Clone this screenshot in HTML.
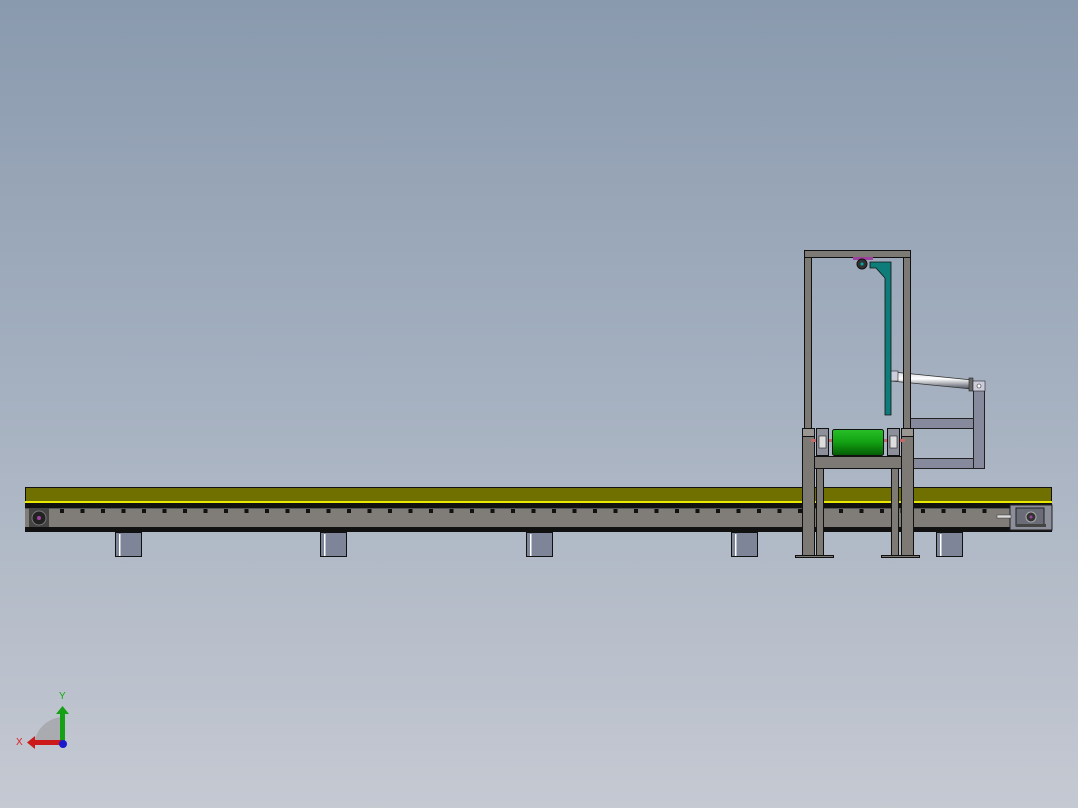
<!DOCTYPE html>
<html><head><meta charset="utf-8"><style>
html,body{margin:0;padding:0}
body{width:1078px;height:808px;overflow:hidden;background:linear-gradient(#8a9aae 0%,#a3afbf 45%,#c5c9d2 100%);font-family:"Liberation Sans",sans-serif}
svg{position:absolute;left:0;top:0}
</style></head><body>
<svg width="1078" height="808" viewBox="0 0 1078 808">
<defs>
<pattern id="holes" x="60" y="505" width="20.5" height="12" patternUnits="userSpaceOnUse">
<rect x="0" y="4" width="4" height="4" fill="#111"/>
</pattern>
<linearGradient id="grn" x1="0" y1="0" x2="0" y2="1"><stop offset="0" stop-color="#28c028"/><stop offset="0.5" stop-color="#12a012"/><stop offset="1" stop-color="#055a05"/></linearGradient>
<linearGradient id="cyl" x1="0" y1="0" x2="0" y2="1"><stop offset="0" stop-color="#d8dce4"/><stop offset="0.4" stop-color="#ffffff"/><stop offset="1" stop-color="#4a4f5c"/></linearGradient>
</defs>
<!-- legs -->
<g fill="#7e8598" stroke="#111" stroke-width="1">
<rect x="115.5" y="532.5" width="26" height="24"/>
<rect x="320.5" y="532.5" width="26" height="24"/>
<rect x="526.5" y="532.5" width="26" height="24"/>
<rect x="731.5" y="532.5" width="26" height="24"/>
<rect x="936.5" y="532.5" width="26" height="24"/>
</g>
<g fill="#fff"><rect x="119" y="534" width="1.5" height="22"/><rect x="324" y="534" width="1.5" height="22"/><rect x="530" y="534" width="1.5" height="22"/><rect x="735" y="534" width="1.5" height="22"/><rect x="940" y="534" width="1.5" height="22"/></g>
<!-- conveyor -->
<rect x="25.5" y="487.5" width="1026" height="14" fill="#6f7000" stroke="#111"/>
<rect x="25" y="501" width="1027" height="2" fill="#e8e800"/>
<rect x="25" y="503" width="1027" height="5" fill="#111"/>
<rect x="25" y="508" width="1027" height="20" fill="#807c78"/>
<rect x="25" y="508" width="1027" height="1" fill="#555"/>
<rect x="50" y="505" width="950" height="12" fill="url(#holes)"/>
<rect x="25" y="527" width="1027" height="5" fill="#111"/>
<!-- left drive -->
<rect x="29" y="508" width="20" height="19" fill="#444"/>
<circle cx="39" cy="518" r="7" fill="#222" stroke="#777"/>
<circle cx="39" cy="518" r="2" fill="#a040a0"/>
<!-- right drive -->
<rect x="1010" y="505" width="42" height="25" fill="#8c8e9a" stroke="#222"/>
<rect x="1016" y="508" width="28" height="18" fill="#6a6c78" stroke="#222"/>
<circle cx="1031" cy="517" r="5" fill="#333" stroke="#aaa"/>
<circle cx="1031" cy="517" r="1.5" fill="#a040a0"/>
<rect x="997" y="515" width="14" height="3" fill="#ddd" stroke="#333" stroke-width="0.5"/>
<rect x="1016" y="524" width="30" height="3" fill="#444"/>
<!-- gray bracket behind -->
<g fill="#868a9c" stroke="#222">
<rect x="910.5" y="418.5" width="70" height="10"/>
<rect x="910.5" y="458.5" width="74" height="10"/>
<rect x="973.5" y="387.5" width="11" height="81"/>
</g>
<!-- cylinder -->
<polygon points="893,372 972,380 971,389 892,381" fill="url(#cyl)" stroke="#333" stroke-width="0.7"/>
<rect x="969" y="378" width="4" height="13" fill="#666" stroke="#222" stroke-width="0.6"/>
<rect x="973" y="381" width="12" height="10" fill="#ccd" stroke="#222" stroke-width="0.6"/>
<circle cx="979" cy="386" r="2" fill="#fff" stroke="#222" stroke-width="0.6"/>
<rect x="890" y="371" width="8" height="10" fill="#ccd" stroke="#222" stroke-width="0.6"/>
<!-- frame -->
<g fill="#7d7a76" stroke="#111">
<rect x="804.5" y="250.5" width="106" height="7"/>
<rect x="804.5" y="257.5" width="7" height="171"/>
<rect x="903.5" y="257.5" width="7" height="171"/>
<rect x="802.5" y="428.5" width="12" height="127"/>
<rect x="901.5" y="428.5" width="12" height="127"/>
<rect x="816.5" y="455.5" width="7" height="100"/>
<rect x="891.5" y="455.5" width="7" height="100"/>
<rect x="814.5" y="456.5" width="87" height="12"/>
<rect x="795.5" y="555.5" width="38" height="2"/>
<rect x="881.5" y="555.5" width="38" height="2"/>
</g>
<g fill="#9a9792" stroke="#111"><rect x="802.5" y="428.5" width="12" height="8"/><rect x="901.5" y="428.5" width="12" height="8"/></g>
<!-- teal arm -->
<polygon points="870,262 891,262 891,415 885,415 885,278 876,268 870,268" fill="#0e7d7a" stroke="#111" stroke-width="0.8"/>
<rect x="853" y="257" width="20" height="3" fill="#a040a0"/>
<circle cx="862" cy="264" r="5" fill="#333" stroke="#111"/>
<circle cx="862" cy="264" r="1.5" fill="#0aa"/>
<!-- roller -->
<rect x="811" y="439" width="94" height="3" fill="#c06a6a"/>
<rect x="832.5" y="429.5" width="51" height="26" rx="2" fill="url(#grn)" stroke="#111"/>
<g fill="#8d8f9a" stroke="#111"><rect x="816.5" y="428.5" width="12" height="27"/><rect x="887.5" y="428.5" width="12" height="27"/></g>
<g fill="#ddd" stroke="#222" stroke-width="0.6"><rect x="819" y="436" width="7" height="12"/><rect x="890" y="436" width="7" height="12"/></g>
<!-- triad -->
<path d="M34,745 A30,30 0 0 1 62,717 L62,745 Z" fill="#a9abb1"/>
<rect x="60" y="713" width="5" height="32" fill="#16a016"/>
<polygon points="56,714 69,714 62.5,706" fill="#16a016"/>
<rect x="34" y="740" width="28" height="5" fill="#cc1a1a"/>
<polygon points="35,736 35,749 27,742.5" fill="#cc1a1a"/>
<circle cx="63" cy="744" r="4" fill="#1a1acc"/>
<text x="59" y="699" font-size="10" fill="#1a1" font-family="Liberation Sans,sans-serif">Y</text>
<text x="16" y="745" font-size="10" fill="#d22" font-family="Liberation Sans,sans-serif">X</text>
</svg>
</body></html>
